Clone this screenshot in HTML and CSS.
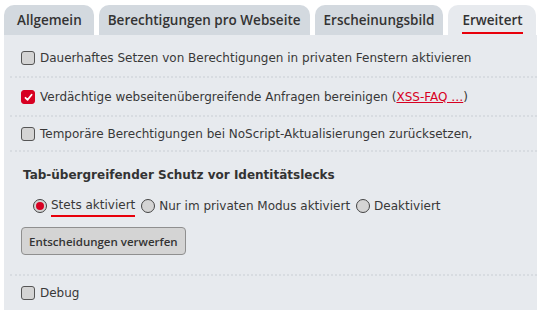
FILE: index.html
```html
<!DOCTYPE html>
<html lang="de">
<head>
    <meta charset="UTF-8">
    <title>NoScript Optionen</title>
    <link rel="stylesheet" href="styles.css">
</head>
<body>
    <div class="tabs">
        <div class="tab primera">Allgemein</div>
        <div class="tab">Berechtigungen pro Webseite</div>
        <div class="tab">Erscheinungsbild</div>
        <div class="tab activo"><span class="marca">Erweitert</span></div>
    </div>
    <div class="panel">
        <div class="fila">
            <span class="caja"></span>
            <span>Dauerhaftes Setzen von Berechtigungen in privaten Fenstern aktivieren</span>
        </div>
        <div class="fila">
            <span class="caja marcada">
                <svg width="9" height="9" viewBox="0 0 9 9"><path d="M1.5 4.8 L3.6 6.8 L7.6 1.8" fill="none" stroke="#fff" stroke-width="1.8" stroke-linecap="round" stroke-linejoin="round"/></svg>
            </span>
            <span>Verdächtige webseitenübergreifende Anfragen bereinigen (<a href="#">XSS-FAQ …</a>)</span>
        </div>
        <div class="fila corta">
            <span class="caja"></span>
            <span>Temporäre Berechtigungen bei NoScript-Aktualisierungen zurücksetzen,</span>
        </div>
        <div class="seccion">
            <h3>Tab-übergreifender Schutz vor Identitätslecks</h3>
            <div class="radios">
                <span class="radio elegido"></span>
                <span class="marca">Stets aktiviert</span>
                <span class="radio"></span>
                <span>Nur im privaten Modus aktiviert</span>
                <span class="radio"></span>
                <span>Deaktiviert</span>
            </div>
            <button>Entscheidungen verwerfen</button>
        </div>
        <div class="fila ultima">
            <span class="caja"></span>
            <span>Debug</span>
        </div>
    </div>
</body>
</html>
```

FILE: styles.css
```css
body {
    margin: 0;
    padding: 5px 0 0 4px;
    background-color: #ffffff;
    font-family: "DejaVu Sans", Verdana, sans-serif;
    font-size: 12px;
    color: #383838;
    overflow: hidden;
}

.tabs {
    display: flex;
    gap: 5px;
}

.tab {
    flex-shrink: 0;
    white-space: nowrap;
    height: 30px;
    line-height: 30px;
    padding: 0 9px;
    background-color: #d3d9df;
    border-radius: 10px 10px 0 0;
    font-family: "Open Sans", sans-serif;
    font-weight: 600;
    font-size: 13.5px;
    color: #333333;
}

.tab.primera {
    padding: 0 12px 0 13px;
}

.tab.activo {
    background-color: #e7eaee;
    padding: 0 13px 0 14px;
}

.marca {
    border-bottom: 2px solid #e8000b;
    padding-bottom: 1px;
}

.tab .marca {
    padding-bottom: 3px;
}

.panel {
    background-color: #e7eaee;
    padding-top: 4px;
    min-height: 280px;
}

.fila {
    display: flex;
    align-items: center;
    gap: 5px;
    margin: 0 0 0 6px;
    padding: 10px 0 9px 11px;
    line-height: 18px;
    border-bottom: 2px dotted #d8dce1;
}

.fila.corta {
    padding: 8px 0 7px 11px;
}

.fila.ultima {
    padding-top: 8px;
    border-bottom: none;
}

.caja {
    width: 12px;
    height: 12px;
    border: 1px solid #555555;
    border-radius: 3px;
    background-color: #d4d4d4;
    display: flex;
    align-items: center;
    justify-content: center;
    flex-shrink: 0;
}

.caja.marcada {
    background-color: #d70022;
    border-color: #d70022;
}

a {
    color: #d70022;
}

.seccion {
    margin-left: 6px;
    padding: 14px 0 19px 13px;
    border-bottom: 2px dotted #d8dce1;
}

h3 {
    margin: 0 0 13px 0;
    font-size: 12px;
    line-height: 18px;
    color: #333333;
}

.radios {
    display: flex;
    align-items: center;
    gap: 4px;
    margin-left: 10px;
    line-height: 18px;
    height: 18px;
}

.radio {
    width: 12px;
    height: 12px;
    border: 1px solid #444444;
    border-radius: 50%;
    background-color: #d4d4d4;
    display: flex;
    align-items: center;
    justify-content: center;
    margin-left: 2px;
}

.radio:first-child {
    margin-left: 0;
}

.radio.elegido::after {
    content: "";
    width: 8px;
    height: 8px;
    border-radius: 50%;
    background-color: #d70022;
}

button {
    display: block;
    margin: 12px 0 0 -2px;
    height: 28px;
    padding: 0 7px;
    background-color: #d4d4d4;
    border: 1px solid #8f8f8f;
    border-radius: 4px;
    font-family: "Open Sans", sans-serif;
    font-weight: 600;
    font-size: 11.5px;
    color: #333333;
}
```
